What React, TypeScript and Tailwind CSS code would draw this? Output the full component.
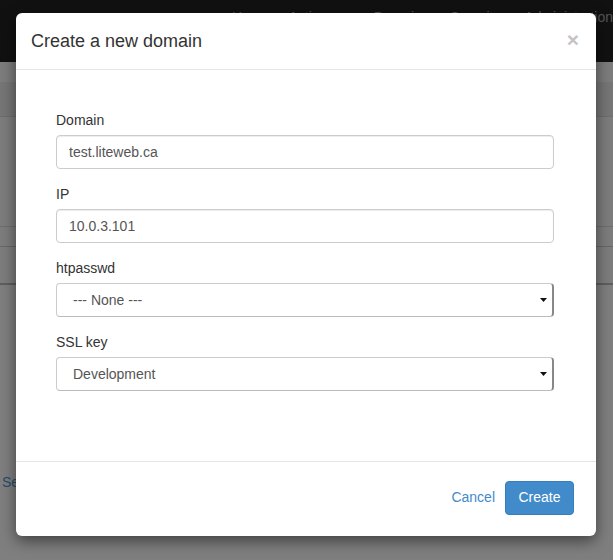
import React from "react";

function Caret() {
  return (
    <svg width="7" height="4" viewBox="0 0 7 4" className="block">
      <path d="M0 0 L7 0 L3.5 4 Z" fill="#111" />
    </svg>
  );
}

function Field({ label, value }: { label: string; value: string }) {
  return (
    <div className="mb-[15px]">
      <div className="h-[20px] leading-[20px] mb-[5px] text-[14px] text-[#333]">{label}</div>
      <div className="h-[34px] border border-[#ccc] rounded-[4px] flex items-center pl-[12px] text-[14px] text-[#555] shadow-[inset_0_1px_1px_rgba(0,0,0,0.075)]">
        {value}
      </div>
    </div>
  );
}

function SelectField({ label, value }: { label: string; value: string }) {
  return (
    <div className="mb-[15px]">
      <div className="h-[20px] leading-[20px] mb-[5px] text-[14px] text-[#333]">{label}</div>
      <div className="h-[34px] border border-[#ccc] border-r-[#888] border-b-[#bbb] border-r-2 rounded-[4px] flex items-center pl-[16px] pr-[5px] text-[14px] text-[#555]">
        <span className="flex-1">{value}</span>
        <Caret />
      </div>
    </div>
  );
}

export default function App() {
  return (
    <div className="relative w-[613px] h-[560px] overflow-hidden bg-[#7f7f7f] font-['Liberation_Sans',Arial,sans-serif]">
      {/* background page (dimmed) */}
      <div className="h-[62px] bg-[#111] flex pl-[232px] pt-[7px] text-[14px] leading-[20px] text-[#555] whitespace-nowrap">
        <span className="w-[63px]">Home</span>
        <span className="w-[95px]">Actions</span>
        <span className="w-[85px]">Domains</span>
        <span className="w-[83px]">Security</span>
        <span>Administration</span>
      </div>
      <div className="h-[20px] bg-[#7d7d7d]" />
      <div className="h-[35px] bg-[#767676] border-b border-[#6e6e6e]" />
      <div className="h-[110px] bg-[#7d7d7d] border-b border-[#6e6e6e]" />
      <div className="h-[20px] bg-[#7d7d7d] border-b border-[#676767]" />
      <div className="h-[38px] bg-[#7d7d7d] border-b-2 border-[#5e5e5e]" />
      <div className="pt-[187px] pl-[2px] text-[14px] leading-[20px] text-[#284a6b]">Settings</div>

      {/* modal */}
      <div className="absolute left-[16px] top-[13px] w-[580px] bg-white rounded-[6px] shadow-[0_5px_15px_rgba(0,0,0,0.5)]">
        <div className="h-[57px] border-b border-[#e5e5e5] flex items-center justify-between pl-[15px] pr-[17px]">
          <div className="text-[18px] text-[#333] leading-[26px]">Create a new domain</div>
          <div className="text-[21px] font-bold text-[#c4c4c4] leading-[20px] -mt-[3px]">×</div>
        </div>
        <div className="pt-[40px] pb-[55px] pl-[40px] pr-[42px]">
          <Field label="Domain" value="test.liteweb.ca" />
          <Field label="IP" value="10.0.3.101" />
          <SelectField label="htpasswd" value="--- None ---" />
          <SelectField label="SSL key" value="Development" />
        </div>
        <div className="h-[75px] border-t border-[#e5e5e5] flex items-center justify-end pr-[22px] pb-[3px]">
          <span className="text-[14px] text-[#428bca] mr-[10px]">Cancel</span>
          <div className="h-[34px] w-[69px] bg-[#428bca] border border-[#357ebd] rounded-[4px] text-white text-[14px] flex items-center justify-center">
            Create
          </div>
        </div>
      </div>
    </div>
  );
}
